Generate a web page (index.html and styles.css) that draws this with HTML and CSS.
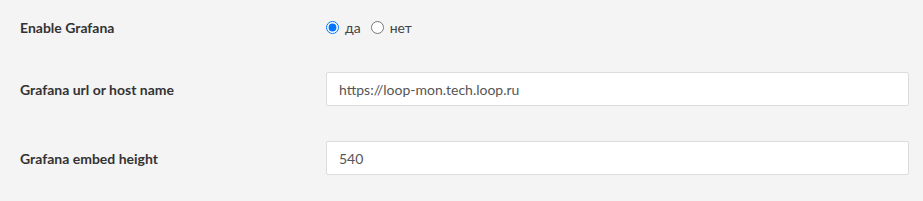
FILE: index.html
```html
<!DOCTYPE html>
<html>
<head>
<meta charset="utf-8">
<link rel="stylesheet" href="styles.css">
</head>
<body>
<div class="form">
  <div class="row row-radio">
    <label class="label">Enable Grafana</label>
    <div class="control radios">
      <label class="opt"><input type="radio" name="en" checked><span>да</span></label>
      <label class="opt"><input type="radio" name="en"><span>нет</span></label>
    </div>
  </div>
  <div class="row">
    <label class="label">Grafana url or host name</label>
    <div class="control"><input class="text" type="text" value="https://loop-mon.tech.loop.ru"></div>
  </div>
  <div class="row">
    <label class="label">Grafana embed height</label>
    <div class="control"><input class="text" type="text" value="540"></div>
  </div>
</div>
</body>
</html>
```
FILE: styles.css
```css
html, body {
  margin: 0;
  padding: 0;
  background: #f4f4f4;
}
body {
  font-family: Lato, "Open Sans", sans-serif;
  color: #333;
}
.form {
  display: flex;
  flex-direction: column;
  gap: 35px;
  padding: 17px 14px 0 20px;
}
.row {
  display: flex;
  align-items: center;
}
.row-radio {
  height: 20px;
}
.label {
  width: 306px;
  flex: none;
  font-size: 14px;
  font-weight: bold;
  color: #333;
}
.control {
  flex: 1;
  display: flex;
  align-items: center;
}
.radios {
  gap: 10px;
}
.opt {
  display: flex;
  align-items: center;
  gap: 6px;
  font-size: 14px;
  color: #444;
}
.opt input {
  margin: 0;
  width: 13px;
  height: 13px;
}
.text {
  box-sizing: border-box;
  width: 583px;
  height: 34px;
  border: 1px solid #dcdcdc;
  border-radius: 2px;
  background: #fff;
  padding: 0 12px;
  font-family: Lato, "Open Sans", sans-serif;
  font-size: 14px;
  color: #555;
  outline: none;
}
```
